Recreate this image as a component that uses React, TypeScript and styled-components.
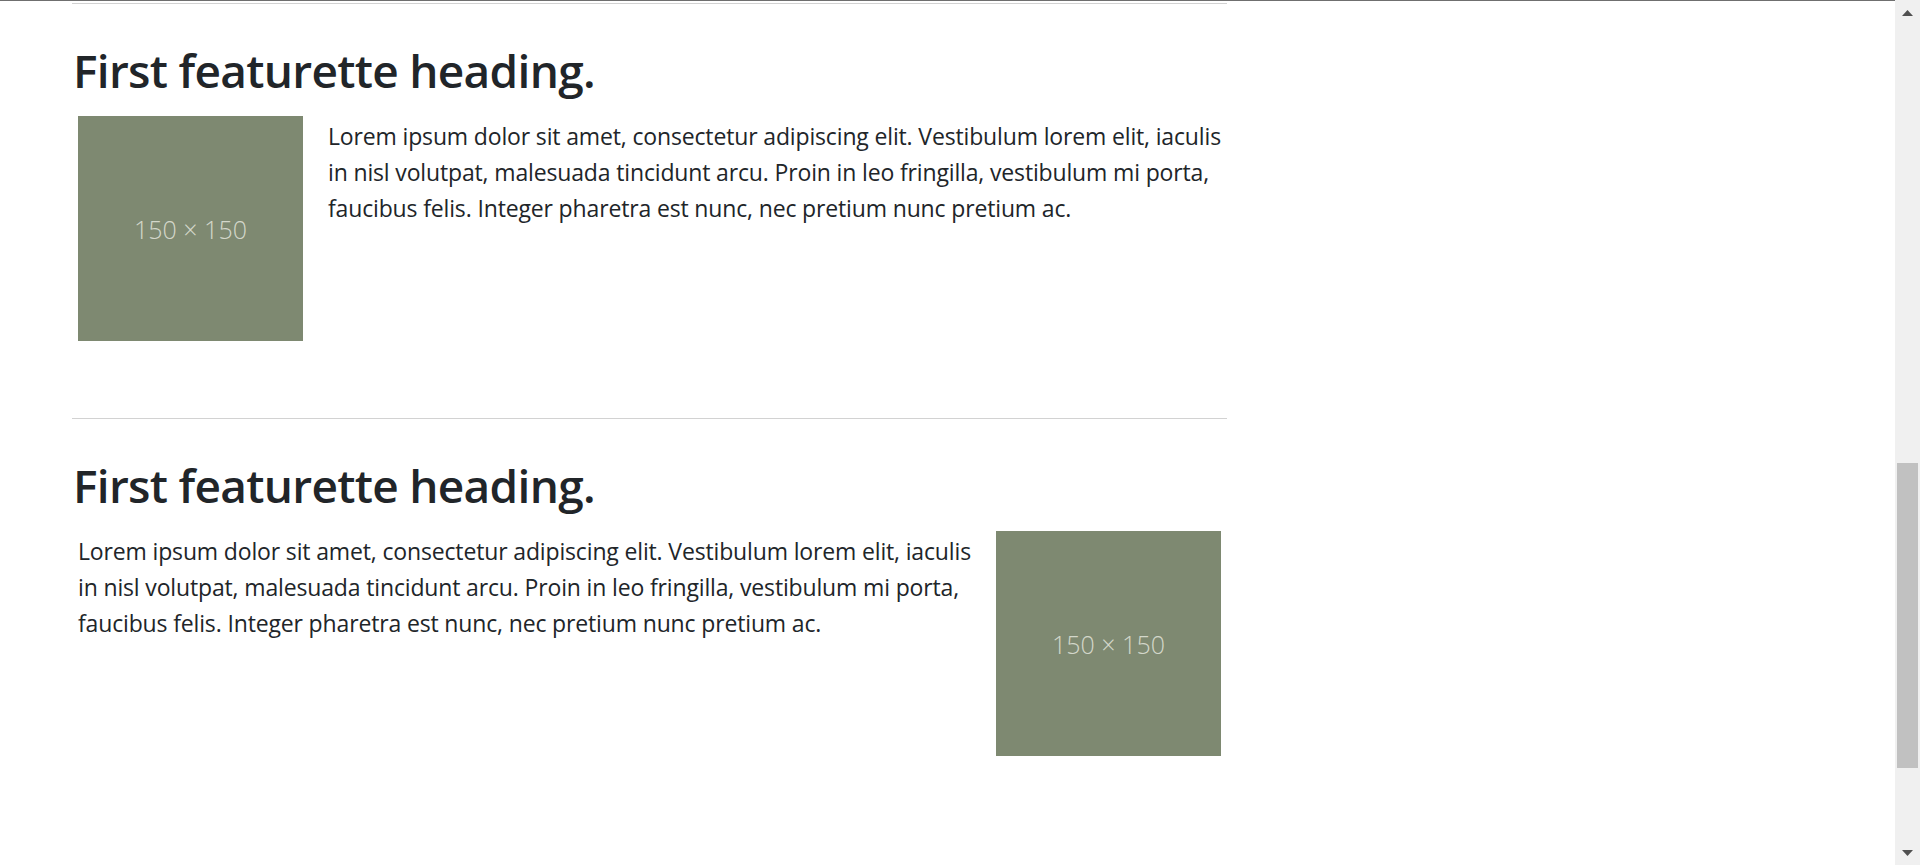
import React from "react";
import styled, { createGlobalStyle } from "styled-components";

const GlobalStyle = createGlobalStyle`
  html, body {
    margin: 0;
    padding: 0;
    height: 865px;
    overflow: hidden;
    background: #ffffff;
  }
  #root {
    height: 865px;
  }
`;

const Page = styled.div`
  display: flex;
  height: 865px;
  width: 1920px;
`;

const Main = styled.main`
  flex: 1;
  min-width: 0;
  border-top: 1px solid #6f6f6f;
  overflow: hidden;
  font-family: "Open Sans", "Noto Sans", sans-serif;
  color: #212529;
`;

const Column = styled.div`
  width: 1155px;
  margin-left: 72px;
`;

const Divider = styled.hr<{ $top: number }>`
  margin: ${(p) => p.$top}px 0 0;
  border: 0;
  border-top: 1px solid #d2d2d2;
  height: 0;
`;

const Featurette = styled.section<{ $last?: boolean }>`
  padding-top: 38px;
  padding-bottom: ${(p) => (p.$last ? 78 : 77)}px;
`;

const Heading = styled.h2`
  margin: 0 0 18px;
  padding-left: 1px;
  font-size: 46px;
  line-height: 56px;
  font-weight: 600;
  letter-spacing: -0.7px;
`;

const Body = styled.div<{ $reverse?: boolean }>`
  display: flex;
  flex-direction: ${(p) => (p.$reverse ? "row-reverse" : "row")};
  align-items: flex-start;
  gap: 25px;
  padding: 0 6px;
`;

const Placeholder = styled.div`
  flex: 0 0 225px;
  width: 225px;
  height: 225px;
  background: #7e8971;
  display: flex;
  align-items: center;
  justify-content: center;
  color: #d3d7ca;
  font-family: "Open Sans", sans-serif;
  font-weight: 300;
  font-size: 25px;
`;

const Text = styled.p`
  flex: 1;
  margin: 0;
  padding-top: 2px;
  font-size: 23px;
  line-height: 36px;
  font-weight: 400;
  letter-spacing: -0.15px;
`;

const Line = styled.span`
  display: block;
  white-space: nowrap;
`;

const Scrollbar = styled.div`
  flex: 0 0 25px;
  width: 25px;
  height: 865px;
  background: #f0f0f0;
  display: flex;
  flex-direction: column;
`;

const ArrowButton = styled.div`
  height: 25px;
  display: flex;
  align-items: center;
  justify-content: center;
`;

const Track = styled.div`
  flex: 1;
  display: flex;
  flex-direction: column;
  align-items: center;
`;

const Thumb = styled.div<{ $offset: number; $size: number }>`
  margin-top: ${(p) => p.$offset}px;
  height: ${(p) => p.$size}px;
  width: 21px;
  background: #c1c1c1;
`;

const lines = [
  "Lorem ipsum dolor sit amet, consectetur adipiscing elit. Vestibulum lorem elit, iaculis",
  "in nisl volutpat, malesuada tincidunt arcu. Proin in leo fringilla, vestibulum mi porta,",
  "faucibus felis. Integer pharetra est nunc, nec pretium nunc pretium ac.",
];

const Arrow = ({ down }: { down?: boolean }) => (
  <svg width="11" height="6" viewBox="0 0 11 6">
    {down ? (
      <polygon points="0,0 11,0 5.5,6" fill="#505050" />
    ) : (
      <polygon points="0,6 11,6 5.5,0" fill="#505050" />
    )}
  </svg>
);

const FeaturetteBlock = ({ reverse, last }: { reverse?: boolean; last?: boolean }) => (
  <Featurette $last={last}>
    <Heading>First featurette heading.</Heading>
    <Body $reverse={reverse}>
      <Placeholder>150 × 150</Placeholder>
      <Text>
        {lines.map((l) => (
          <Line key={l}>{l}</Line>
        ))}
      </Text>
    </Body>
  </Featurette>
);

export default function App() {
  return (
    <>
      <GlobalStyle />
      <Page>
        <Main>
          <Column>
            <Divider $top={2} />
            <FeaturetteBlock />
            <Divider $top={0} />
            <FeaturetteBlock reverse last />
          </Column>
        </Main>
        <Scrollbar>
          <ArrowButton>
            <Arrow />
          </ArrowButton>
          <Track>
            <Thumb $offset={438} $size={305} />
          </Track>
          <ArrowButton>
            <Arrow down />
          </ArrowButton>
        </Scrollbar>
      </Page>
    </>
  );
}
